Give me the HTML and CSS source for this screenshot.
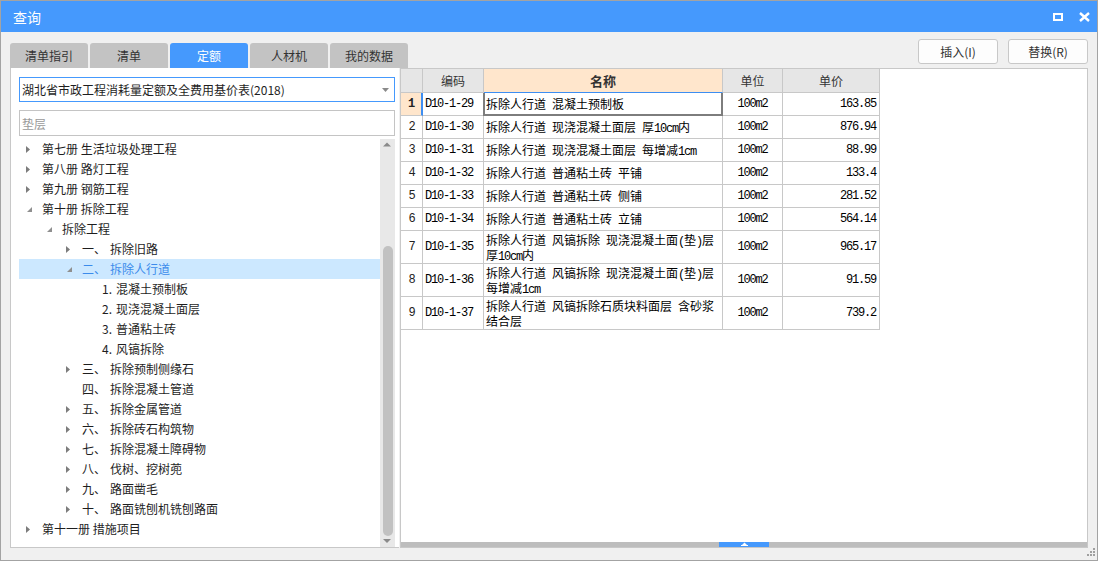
FILE: index.html
```html
<!DOCTYPE html>
<html lang="zh-CN">
<head>
<meta charset="utf-8">
<title>查询</title>
<link rel="stylesheet" href="styles.css">
</head>
<body>
<div class="window">
  <div class="titlebar">
    <span class="title">查询</span>
    <div class="winbtns">
      <span class="wb-max"></span>
      <svg class="wb-close" width="11" height="10" viewBox="0 0 11 10"><path d="M1 1L10 9M10 1L1 9" stroke="#fff" stroke-width="2.4" fill="none"/></svg>
    </div>
  </div>
  <div class="body">
    <div class="toprow">
      <div class="tabs">
        <div class="tab">清单指引</div>
        <div class="tab">清单</div>
        <div class="tab active">定额</div>
        <div class="tab">人材机</div>
        <div class="tab">我的数据</div>
      </div>
      <div class="actions">
        <button class="btn">插入(I)</button>
        <button class="btn">替换(R)</button>
      </div>
    </div>
    <div class="panels">
      <div class="left">
        <div class="select">
          <span>湖北省市政工程消耗量定额及全费用基价表(2018)</span>
          <svg class="sel-arrow" width="7" height="4" viewBox="0 0 7 4"><path d="M0 0H7L3.5 4Z" fill="#8a8a8a"/></svg>
        </div>
        <div class="search">垫层</div>
        <div class="treewrap">
          <ul class="tree">
            <li class="row l0"><svg class="tw" width="23" height="20"><path d="M7 7L11 10.5L7 14Z"/></svg>第七册 生活垃圾处理工程</li>
            <li class="row l0"><svg class="tw" width="23" height="20"><path d="M7 7L11 10.5L7 14Z"/></svg>第八册 路灯工程</li>
            <li class="row l0"><svg class="tw" width="23" height="20"><path d="M7 7L11 10.5L7 14Z"/></svg>第九册 钢筋工程</li>
            <li class="row l0"><svg class="tw ex" width="23" height="20"><path d="M13 8V13H8Z"/></svg>第十册 拆除工程</li>
            <li class="row l1"><svg class="tw ex" width="23" height="20"><path d="M13 8V13H8Z"/></svg>拆除工程</li>
            <li class="row l2"><svg class="tw" width="23" height="20"><path d="M7 7L11 10.5L7 14Z"/></svg><span class="ord">一、</span>拆除旧路</li>
            <li class="row l2 sel"><svg class="tw ex" width="23" height="20"><path d="M13 8V13H8Z"/></svg><span class="ord">二、</span>拆除人行道</li>
            <li class="row l3"><span class="tw"></span><span class="num">1.</span>混凝土预制板</li>
            <li class="row l3"><span class="tw"></span><span class="num">2.</span>现浇混凝土面层</li>
            <li class="row l3"><span class="tw"></span><span class="num">3.</span>普通粘土砖</li>
            <li class="row l3"><span class="tw"></span><span class="num">4.</span>风镐拆除</li>
            <li class="row l2"><svg class="tw" width="23" height="20"><path d="M7 7L11 10.5L7 14Z"/></svg><span class="ord">三、</span>拆除预制侧缘石</li>
            <li class="row l2"><span class="tw"></span><span class="ord">四、</span>拆除混凝土管道</li>
            <li class="row l2"><svg class="tw" width="23" height="20"><path d="M7 7L11 10.5L7 14Z"/></svg><span class="ord">五、</span>拆除金属管道</li>
            <li class="row l2"><svg class="tw" width="23" height="20"><path d="M7 7L11 10.5L7 14Z"/></svg><span class="ord">六、</span>拆除砖石构筑物</li>
            <li class="row l2"><svg class="tw" width="23" height="20"><path d="M7 7L11 10.5L7 14Z"/></svg><span class="ord">七、</span>拆除混凝土障碍物</li>
            <li class="row l2"><svg class="tw" width="23" height="20"><path d="M7 7L11 10.5L7 14Z"/></svg><span class="ord">八、</span>伐树、挖树蔸</li>
            <li class="row l2"><svg class="tw" width="23" height="20"><path d="M7 7L11 10.5L7 14Z"/></svg><span class="ord">九、</span>路面凿毛</li>
            <li class="row l2"><svg class="tw" width="23" height="20"><path d="M7 7L11 10.5L7 14Z"/></svg><span class="ord">十、</span>路面铣刨机铣刨路面</li>
            <li class="row l0"><svg class="tw" width="23" height="20"><path d="M7 7L11 10.5L7 14Z"/></svg>第十一册 措施项目</li>
          </ul>
          <div class="vscroll">
            <svg class="vs-up" width="15" height="12"><path d="M3 7.5L7 3.5L11 7.5Z"/></svg>
            <div class="vs-thumb"></div>
            <svg class="vs-down" width="15" height="11"><path d="M3 3H11L7 7Z"/></svg>
          </div>
        </div>
      </div>
      <div class="right">
        <div class="gridarea">
          <table class="grid">
            <colgroup>
              <col class="c-no"><col class="c-code"><col class="c-name"><col class="c-unit"><col class="c-price">
            </colgroup>
            <thead>
              <tr><th></th><th>编码</th><th class="cur">名称</th><th>单位</th><th>单价</th></tr>
            </thead>
            <tbody>
              <tr><td class="no cur">1</td><td class="code">D10-1-29</td><td class="name focus">拆除人行道 混凝土预制板</td><td class="unit">100m2</td><td class="price">163.85</td></tr>
              <tr><td class="no">2</td><td class="code">D10-1-30</td><td class="name">拆除人行道 现浇混凝土面层 厚<span class="a">10cm</span>内</td><td class="unit">100m2</td><td class="price">876.94</td></tr>
              <tr><td class="no">3</td><td class="code">D10-1-31</td><td class="name">拆除人行道 现浇混凝土面层 每增减<span class="a">1cm</span></td><td class="unit">100m2</td><td class="price">88.99</td></tr>
              <tr><td class="no">4</td><td class="code">D10-1-32</td><td class="name">拆除人行道 普通粘土砖 平铺</td><td class="unit">100m2</td><td class="price">133.4</td></tr>
              <tr><td class="no">5</td><td class="code">D10-1-33</td><td class="name">拆除人行道 普通粘土砖 侧铺</td><td class="unit">100m2</td><td class="price">281.52</td></tr>
              <tr><td class="no">6</td><td class="code">D10-1-34</td><td class="name">拆除人行道 普通粘土砖 立铺</td><td class="unit">100m2</td><td class="price">564.14</td></tr>
              <tr class="tall"><td class="no">7</td><td class="code">D10-1-35</td><td class="name">拆除人行道 风镐拆除 现浇混凝土面<span class="a">(</span>垫<span class="a">)</span>层<br>厚<span class="a">10cm</span>内</td><td class="unit">100m2</td><td class="price">965.17</td></tr>
              <tr class="tall"><td class="no">8</td><td class="code">D10-1-36</td><td class="name">拆除人行道 风镐拆除 现浇混凝土面<span class="a">(</span>垫<span class="a">)</span>层<br>每增减<span class="a">1cm</span></td><td class="unit">100m2</td><td class="price">91.59</td></tr>
              <tr class="tall"><td class="no">9</td><td class="code">D10-1-37</td><td class="name">拆除人行道 风镐拆除石质块料面层 含砂浆<br>结合层</td><td class="unit">100m2</td><td class="price">739.2</td></tr>
            </tbody>
          </table>
        </div>
        <div class="hsplit">
          <div class="hs-handle">
            <svg width="7" height="5" viewBox="0 0 7 5"><path d="M1 3L3.5 0.5L6 3Z" fill="#fff"/><rect x="0" y="3" width="7" height="1" fill="#fff"/></svg>
          </div>
        </div>
      </div>
    </div>
    <div class="bottomrow">
      <svg class="grip" width="8" height="8" viewBox="0 0 8 8">
        <rect x="6" y="0" width="2" height="2"/>
        <rect x="3" y="3" width="2" height="2"/><rect x="6" y="3" width="2" height="2"/>
        <rect x="0" y="6" width="2" height="2"/><rect x="3" y="6" width="2" height="2"/><rect x="6" y="6" width="2" height="2"/>
      </svg>
    </div>
  </div>
</div>
</body>
</html>
```

FILE: styles.css
```css
* { box-sizing: border-box; }
html, body { margin: 0; padding: 0; }
body {
  width: 1098px;
  height: 561px;
  overflow: hidden;
  font-family: "Noto Sans CJK SC", "Microsoft YaHei", sans-serif;
  font-size: 12px;
  color: #1e1e1e;
  background: #f0f0f0;
}
.window {
  width: 1098px;
  height: 561px;
  border: 1px solid #a3a3a3;
  display: flex;
  flex-direction: column;
  background: #f0f0f0;
}
.titlebar {
  flex: none;
  height: 31px;
  background: #4599fd;
  color: #fff;
  display: flex;
  align-items: center;
  justify-content: space-between;
  padding: 0 7px 0 12px;
}
.title { font-size: 14px; line-height: 20px; }
.winbtns { display: flex; align-items: center; gap: 16px; }
.wb-max {
  display: block;
  width: 10px;
  height: 8px;
  border: 2px solid #fff;
}
.wb-close { display: block; }

.body {
  flex: 1;
  display: flex;
  flex-direction: column;
  padding: 0 9px;
  min-height: 0;
}
.toprow {
  flex: none;
  height: 36px;
  padding-top: 7px;
  display: flex;
  justify-content: space-between;
}
.tabs { display: flex; gap: 2px; margin-top: 4px; height: 25px; }
.tab {
  width: 78px;
  height: 25px;
  background: #c3c3c3;
  border-radius: 3px 3px 0 0;
  display: flex;
  align-items: center;
  justify-content: center;
  color: #333;
  font-size: 12px;
}
.tab.active { background: #4599fd; color: #fff; }
.actions { display: flex; gap: 10px; }
.btn {
  width: 80px;
  height: 25px;
  background: #fdfdfd;
  border: 1px solid #c8c8c8;
  border-radius: 3px;
  font-family: inherit;
  font-size: 12px;
  color: #333;
  padding: 0;
}

.panels {
  flex: none;
  height: 480px;
  display: flex;
  gap: 1px;
}
.left {
  width: 389px;
  flex: none;
  background: #fff;
  border-left: 1px solid #c8c8c8;
  border-bottom: 1px solid #c8c8c8;
  padding: 9px 4px 0 8px;
  display: flex;
  flex-direction: column;
}
.select {
  flex: none;
  height: 25px;
  border: 1px solid #4599fd;
  display: flex;
  align-items: center;
  padding: 0 5px 0 2px;
  color: #1e1e1e;
}
.sel-arrow { margin-left: auto; display: block; }
.search {
  flex: none;
  height: 26px;
  margin-top: 8px;
  border: 1px solid #c4c4c4;
  padding-left: 2px;
  display: flex;
  align-items: center;
  color: #9a9a9a;
}
.treewrap {
  flex: 1;
  min-height: 0;
  margin-top: 3px;
  display: flex;
}
.tree {
  flex: 1;
  list-style: none;
  margin: 0;
  padding: 0;
}
.row {
  height: 20px;
  line-height: 20px;
  display: flex;
  align-items: center;
  white-space: nowrap;
  color: #1e1e1e;
}
.row.l1 { padding-left: 20px; }
.row.l2 { padding-left: 40px; }
.row.l3 { padding-left: 60px; }
.row.sel { background: #cce8ff; color: #3b8beb; }
.tw { flex: none; display: block; width: 23px; height: 20px; fill: #7c7c7c; }
.tw.ex { fill: #8f8f8f; }
.ord { display: inline-block; width: 28px; }
.num { display: inline-block; width: 14px; }
.vscroll {
  flex: none;
  width: 15px;
  background: #e8e8e8;
  display: flex;
  flex-direction: column;
}
.vscroll svg { display: block; fill: #8a8a8a; flex: none; }
.vs-thumb {
  flex: none;
  width: 10px;
  height: 290px;
  margin: 95px auto 0;
  background: #c1c1c1;
  border-radius: 5px;
}

.right {
  flex: 1;
  background: #fff;
  border: 1px solid #c8c8c8;
  display: flex;
  flex-direction: column;
  min-width: 0;
}
.gridarea { flex: 1; min-height: 0; }
.grid {
  border-collapse: separate;
  border-spacing: 0;
  table-layout: fixed;
  width: 479px;
}
.c-no { width: 22px; }
.c-code { width: 61px; }
.c-name { width: 239px; }
.c-unit { width: 60px; }
.c-price { width: 97px; }
.grid th, .grid td {
  padding: 0;
  border: 0;
  border-right: 1px solid #c8c8c8;
  border-bottom: 1px solid #c8c8c8;
  vertical-align: middle;
  white-space: nowrap;
}
.grid thead tr { height: 24px; }
.grid th {
  background: #e6e6e6;
  font-weight: normal;
  font-size: 12px;
  color: #333;
  text-align: center;
}
.grid th.cur {
  background: #ffe6cc;
  font-weight: bold;
  font-size: 13px;
  border-bottom-color: #3d8ef2;
}
.grid tbody tr { height: 23px; }
.grid tbody tr.tall { height: 33px; }
.grid td { color: #000; line-height: 14px; }
.grid tr.tall td.name { line-height: 15px; }
.grid td.no,
.grid td.code,
.grid td.unit,
.grid td.price,
.grid .a {
  font-family: "Liberation Mono", monospace;
  font-size: 12px;
  letter-spacing: -1.2px;
}
.grid .a { line-height: 10px; }
.grid td.no { text-align: center; color: #222; }
.grid td.no.cur {
  background: #ffe6cc;
  font-weight: bold;
  border-right: 2px solid #3d8ef2;
}
.grid td.code { padding-left: 2px; }
.grid td.name { padding-left: 2px; word-spacing: 3.3px; }
.grid td.unit { text-align: center; }
.grid td.price { text-align: right; padding-right: 3px; }
.grid td.focus { position: relative; }
.grid td.focus::after {
  content: "";
  position: absolute;
  left: -1px;
  top: 0;
  right: -1px;
  bottom: -1px;
  border: 2px solid #7d7d7d;
  border-top: 0;
}
.hsplit {
  flex: none;
  height: 5px;
  background: #bdbdbd;
  display: flex;
  justify-content: center;
}
.hs-handle {
  width: 50px;
  height: 5px;
  background: #4599fd;
  display: flex;
  align-items: center;
  justify-content: center;
}
.hs-handle svg { display: block; }

.bottomrow {
  flex: 1;
  display: flex;
  justify-content: flex-end;
  align-items: flex-start;
  padding-right: 1px;
  margin-right: -8px;
}
.grip { display: block; fill: #a0a0a0; }
```
